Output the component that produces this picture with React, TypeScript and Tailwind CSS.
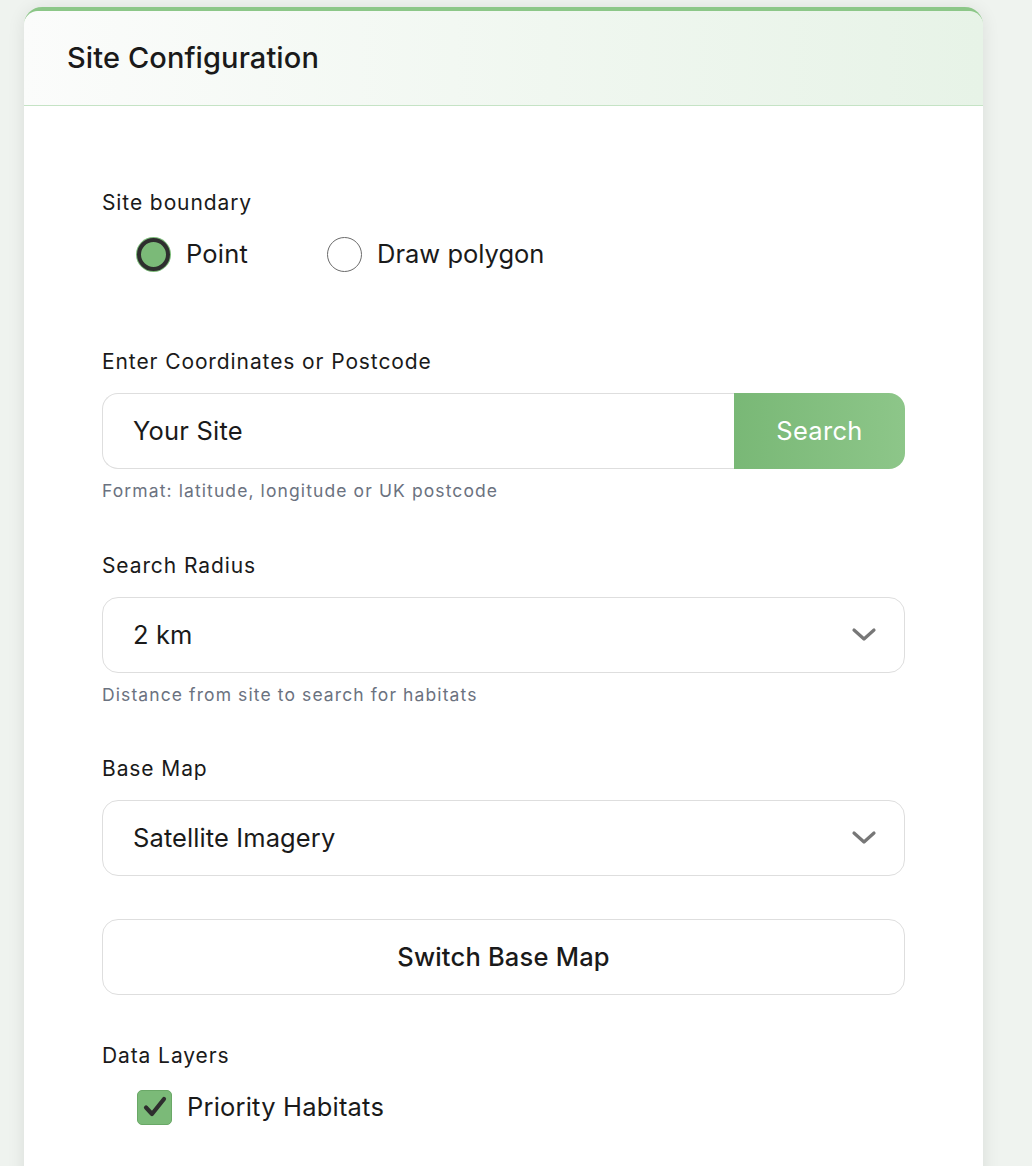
import React from "react";

function Chevron() {
  return (
    <svg width="26" height="16" viewBox="0 0 26 16" fill="none">
      <polyline points="3,3 13,12 23,3" stroke="#777" strokeWidth="3.2" strokeLinecap="round" strokeLinejoin="round" />
    </svg>
  );
}

function Label({ children }: { children: React.ReactNode }) {
  return <div className="text-[21px] leading-[24px] font-normal tracking-[0.9px] text-[#1a1a1a]">{children}</div>;
}

function Helper({ children }: { children: React.ReactNode }) {
  return <div className="mt-[12px] text-[17.5px] leading-[20px] text-[#6b7280] tracking-[1.1px]">{children}</div>;
}

function Select({ value }: { value: string }) {
  return (
    <div className="mt-[19px] h-[76px] rounded-[16px] border border-[#dedede] bg-white flex items-center justify-between pl-[30px] pr-[27px]">
      <span className="text-[25.5px] text-[#1a1a1a] tracking-[0.1px]">{value}</span>
      <Chevron />
    </div>
  );
}

export default function App() {
  return (
    <div
      className="min-h-[1166px] bg-[#eff3ef] pt-[7px] pl-[24px] overflow-hidden"
      style={{ fontFamily: "Inter, 'Noto Sans', sans-serif" }}
    >
      <div className="w-[959px] h-[1200px] bg-white rounded-t-[18px] border-t-[4px] border-[#8cc788] shadow-[0_2px_18px_rgba(0,0,0,0.09)]">
        <div className="h-[95px] rounded-t-[14px] bg-gradient-to-r from-[#fbfcfb] to-[#e7f3e7] border-b border-[#c5e3c5] flex items-center pl-[43px]">
          <h1 className="text-[29px] font-medium text-[#1a1a1a] tracking-[0.1px]">Site Configuration</h1>
        </div>
        <div className="px-[78px] pt-[85px]">
          <Label>Site boundary</Label>
          <div className="mt-[20px] ml-[35px] flex items-center">
            <div className="flex items-center">
              <div className="w-[33px] h-[33px] rounded-full bg-[#7bba78] border-[4px] border-[#2e2e2e] ring-1 ring-[#7bba78]" />
              <span className="ml-[16px] text-[25.5px] text-[#1a1a1a] tracking-[0.2px]">Point</span>
            </div>
            <div className="flex items-center ml-[79px]">
              <div className="w-[35px] h-[35px] rounded-full bg-white border border-[#6b6b6b]" />
              <span className="ml-[15px] text-[25.5px] text-[#1a1a1a]">Draw polygon</span>
            </div>
          </div>

          <div className="mt-[77px]">
            <Label>Enter Coordinates or Postcode</Label>
          </div>
          <div className="mt-[19px] h-[76px] flex">
            <div className="flex-1 rounded-l-[16px] border border-r-0 border-[#dedede] bg-white flex items-center pl-[30px]">
              <span className="text-[25.5px] text-[#1a1a1a] tracking-[0.2px]">Your Site</span>
            </div>
            <div className="w-[171px] rounded-r-[16px] bg-gradient-to-r from-[#79b876] to-[#8dc689] flex items-center justify-center">
              <span className="text-[25.5px] text-white tracking-[0.3px]">Search</span>
            </div>
          </div>
          <Helper>Format: latitude, longitude or UK postcode</Helper>

          <div className="mt-[53px]">
            <Label>Search Radius</Label>
          </div>
          <Select value="2 km" />
          <Helper>Distance from site to search for habitats</Helper>

          <div className="mt-[52px]">
            <Label>Base Map</Label>
          </div>
          <Select value="Satellite Imagery" />

          <div className="mt-[43px] h-[76px] rounded-[16px] border border-[#dedede] bg-white flex items-center justify-center">
            <span className="text-[25.5px] text-[#1a1a1a] font-medium tracking-[0.2px]">Switch Base Map</span>
          </div>

          <div className="mt-[49px]">
            <Label>Data Layers</Label>
          </div>
          <div className="mt-[20px] ml-[35px] flex items-center">
            <div className="w-[35px] h-[35px] rounded-[5px] bg-[#7bba78] border border-[#6aa867] flex items-center justify-center">
              <svg width="26" height="26" viewBox="0 0 26 26" fill="none">
                <path d="M4 13.5 L10 20 L22 5" stroke="#2e2e2e" strokeWidth="4.2" strokeLinecap="round" strokeLinejoin="round" />
              </svg>
            </div>
            <span className="ml-[15px] text-[25.5px] text-[#1a1a1a] tracking-[0.2px]">Priority Habitats</span>
          </div>
        </div>
      </div>
    </div>
  );
}
